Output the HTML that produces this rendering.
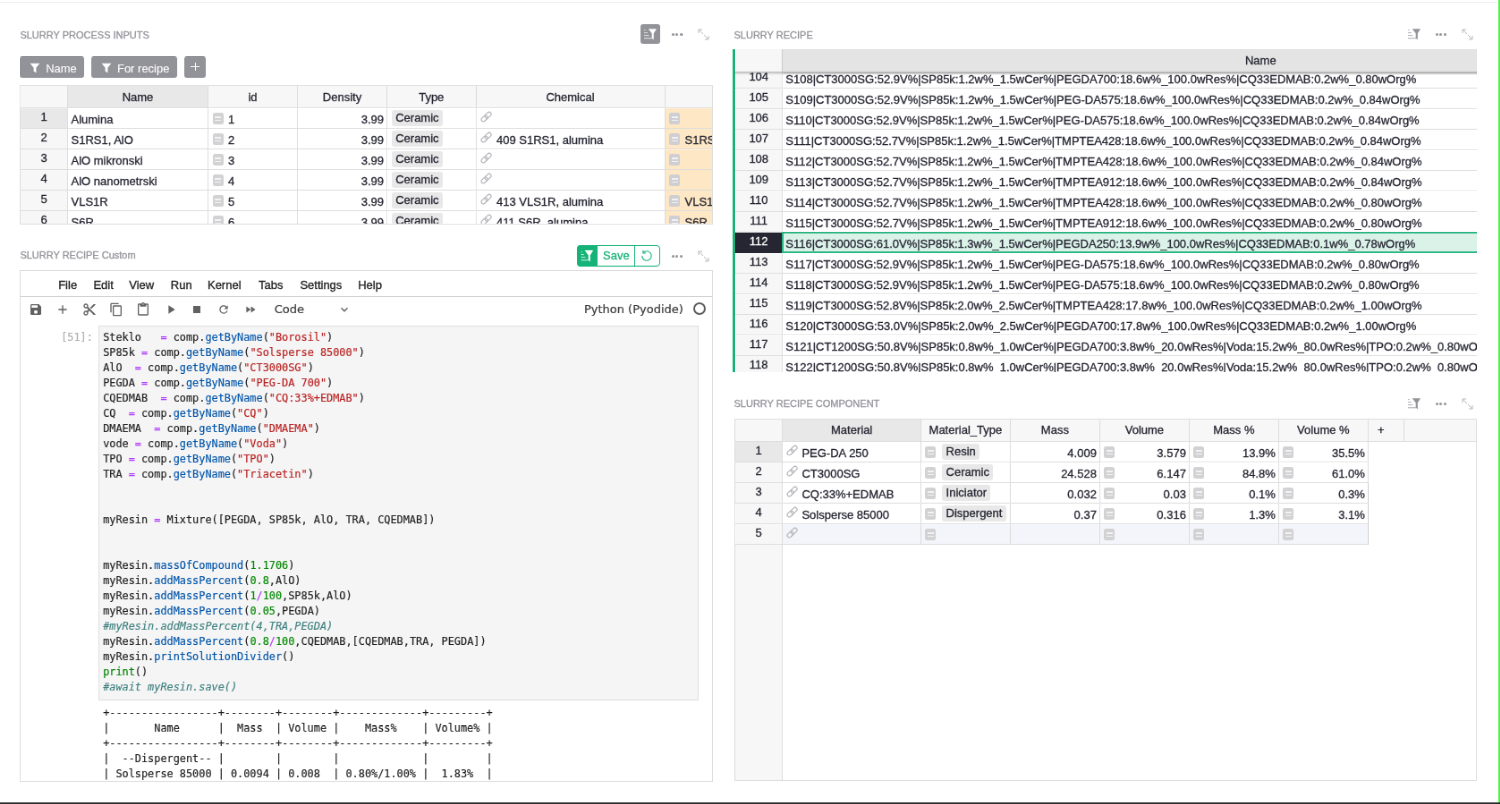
<!DOCTYPE html>
<html lang="en">
<head>
<meta charset="utf-8">
<title>Slurry recipe</title>
<style>
html,body{margin:0;padding:0;background:#fff;}
body{width:1500px;height:804px;overflow:hidden;position:relative;font-family:"Liberation Sans",sans-serif;}
#root{position:absolute;left:0;top:0;width:1677px;height:899px;transform:scale(0.8945);transform-origin:0 0;font-size:13px;color:#262633;will-change:transform;-webkit-text-stroke:0.3px;}
.abs{position:absolute;}
.title{position:absolute;font-size:11px;color:#929299;white-space:nowrap;}
.topline{position:absolute;left:0;top:2px;width:1674px;height:1px;background:#eeeeee;}
.greenline{position:absolute;left:1674.5px;top:0;width:3px;height:899px;background:#48f53c;}
.bottomline{position:absolute;left:0;top:897.4px;width:1677px;height:2px;background:#2a2a2a;}
.grid{position:absolute;overflow:hidden;background:#fff;box-sizing:border-box;}
.c{position:absolute;box-sizing:border-box;border-right:1px solid #dedede;border-bottom:1px solid #dedede;height:23px;line-height:26px;white-space:nowrap;overflow:hidden;padding:0 3px 0 3.5px;background:#fff;}
.h{position:absolute;top:0;box-sizing:border-box;height:25px;line-height:24px;text-align:center;border-right:1px solid #dedede;border-bottom:1px solid #dedede;background:#f7f7f7;white-space:nowrap;overflow:hidden;}
.h.sel,.rn.sel{background:#e8e8e8;}
.rn{background:#f7f7f7;text-align:center;padding:0;line-height:20px;}
.num{text-align:right;}
.rnsel{background:#262633;color:#fff;border-right-color:#262633;border-bottom-color:#262633;}
.tok{position:absolute;top:1.5px;left:5px;background:#e8e8e8;border-radius:3px;padding:0 4.2px;height:18px;line-height:18px;}
.fi{position:absolute;left:4.5px;top:5px;width:12px;height:13px;border-radius:2.5px;background:#d2d2d4;}
.fi:before,.fi:after{content:"";position:absolute;left:2.5px;width:7px;height:1.4px;background:rgba(255,255,255,0.7);}
.fi:before{top:4.2px}.fi:after{top:7.6px}
.wfi{padding-left:22px;}
.lk{position:absolute;left:4.8px;top:3.2px;width:13.2px;height:13.2px;}
.wlk{padding-left:22.5px;}
.orange{background:#fde7c4;}
.addrow{background:#f4f4fb;}
.mi{font-size:13px;line-height:20px;color:#212121;white-space:nowrap;}
.dj{font-family:"DejaVu Sans",sans-serif;font-size:13px;-webkit-text-stroke:0.2px;line-height:20px;color:#3a3a3a;white-space:nowrap;}
.code{font-family:"DejaVu Sans Mono","Liberation Mono",monospace;font-size:11.873px;line-height:17px;margin:0;color:#212121;white-space:pre;-webkit-text-stroke:0.15px;}
.code .p{color:#0055aa}.code .o{color:#b23cff}.code .s{color:#ba2121}.code .n{color:#008800}.code .cm{color:#408080;font-style:italic}.code .b{color:#008000}
.btn{position:absolute;box-sizing:border-box;height:24px;line-height:27px;border-radius:3px;background:#929299;color:#fff;font-size:13px;white-space:nowrap;-webkit-text-stroke:0.1px;}
</style>
</head>
<body>
<div id="root">
<div class="topline"></div>
<!-- SECTION 1 -->
<div class="title" style="left:22.4px;top:33px;">SLURRY PROCESS INPUTS</div>
<div class="abs" style="left:715.82px;top:26.83px;width:22px;height:22px;border-radius:3px;background:#929299"></div><svg class="abs" style="left:715.82px;top:26.83px;width:22px;height:22px" viewBox="0 0 22 22"><g fill="#fff"><g opacity="0.8"><rect x="4" y="6.2" width="1.7" height="0.9"/><rect x="4" y="9.2" width="3.9" height="0.9"/><rect x="4" y="12.2" width="5.5" height="0.9"/><rect x="4" y="15.3" width="9.2" height="1"/></g><path d="M8.8 5.3 H18 L14.8 10.2 V17.4 L12.7 15.6 V10.2 Z"/></g></svg><span class="abs" style="left:750.65px;top:36.73px;width:3px;height:3px;border-radius:50%;background:#929299"></span><span class="abs" style="left:755.35px;top:36.73px;width:3px;height:3px;border-radius:50%;background:#929299"></span><span class="abs" style="left:760.05px;top:36.73px;width:3px;height:3px;border-radius:50%;background:#929299"></span><svg class="abs" style="left:779.77px;top:32.08px;width:13px;height:13px" viewBox="0 0 13 13"><g fill="none" stroke="#b4b4bc" stroke-width="0.95"><path d="M1 5 V1 H5 M1 1 L6 6"/><path d="M12 8 V12 H8 M12 12 L7 7"/></g></svg>
<div class="btn" style="left:22.14px;top:62.72px;width:71.77px;padding-left:29px;">Name</div><svg class="abs" style="left:33.14px;top:69.72px;width:12px;height:12px" viewBox="0 0 12 12"><path fill="#fff" d="M0.6 0.8 H11.4 L7.4 5.8 V11.4 L4.6 9.6 V5.8 Z"/></svg><div class="btn" style="left:101.96px;top:62.72px;width:95.92px;padding-left:29px;">For recipe</div><svg class="abs" style="left:112.96px;top:69.72px;width:12px;height:12px" viewBox="0 0 12 12"><path fill="#fff" d="M0.6 0.8 H11.4 L7.4 5.8 V11.4 L4.6 9.6 V5.8 Z"/></svg><div class="btn" style="left:206.15px;top:62.72px;width:24px;"></div><span class="abs" style="left:213.25px;top:73.92px;width:9.8px;height:1.2px;background:#fff"></span><span class="abs" style="left:217.55px;top:69.62px;width:1.2px;height:9.8px;background:#fff"></span>
<div class="grid" style="left:22px;top:95px;width:774.5px;height:156px;border:1px solid #dedede;">
<div class="h" style="left:0px;top:0px;width:53px;line-height:26px"></div><div class="h sel" style="left:53px;top:0px;width:157px;line-height:26px">Name</div><div class="h" style="left:210px;top:0px;width:100px;line-height:26px">id</div><div class="h" style="left:310px;top:0px;width:100px;line-height:26px">Density</div><div class="h" style="left:410px;top:0px;width:99.5px;line-height:26px">Type</div><div class="h" style="left:509.5px;top:0px;width:211px;line-height:26px">Chemical</div><div class="h" style="left:720.5px;top:0px;width:120px;line-height:26px"></div>
<div class="c rn sel" style="left:0px;top:25px;width:53px">1</div><div class="c" style="left:53px;top:25px;width:157px">Alumina</div><div class="c wfi" style="left:210px;top:25px;width:100px"><span class="fi" style=""></span>1</div><div class="c num" style="left:310px;top:25px;width:100px">3.99</div><div class="c" style="left:410px;top:25px;width:99.5px"><span class="tok">Ceramic</span></div><div class="c wlk" style="left:509.5px;top:25px;width:211px"><svg class="lk" style="" viewBox="0 0 14 14"><g fill="none" stroke="#b0b0b6" stroke-width="1.15" transform="rotate(-43 7 7)"><rect x="-0.1" y="4.6" width="8.3" height="4.8" rx="2.4"/><rect x="5.8" y="4.6" width="8.3" height="4.8" rx="2.4"/></g></svg></div><div class="c wfi orange" style="left:720.5px;top:25px;width:120px"><span class="fi" style="background:#cfced2"></span></div>
<div class="c rn" style="left:0px;top:48px;width:53px">2</div><div class="c" style="left:53px;top:48px;width:157px">S1RS1, AlO</div><div class="c wfi" style="left:210px;top:48px;width:100px"><span class="fi" style=""></span>2</div><div class="c num" style="left:310px;top:48px;width:100px">3.99</div><div class="c" style="left:410px;top:48px;width:99.5px"><span class="tok">Ceramic</span></div><div class="c wlk" style="left:509.5px;top:48px;width:211px"><svg class="lk" style="" viewBox="0 0 14 14"><g fill="none" stroke="#b0b0b6" stroke-width="1.15" transform="rotate(-43 7 7)"><rect x="-0.1" y="4.6" width="8.3" height="4.8" rx="2.4"/><rect x="5.8" y="4.6" width="8.3" height="4.8" rx="2.4"/></g></svg>409 S1RS1, alumina</div><div class="c wfi orange" style="left:720.5px;top:48px;width:120px"><span class="fi" style="background:#cfced2"></span>S1RS1</div>
<div class="c rn" style="left:0px;top:71px;width:53px">3</div><div class="c" style="left:53px;top:71px;width:157px">AlO mikronski</div><div class="c wfi" style="left:210px;top:71px;width:100px"><span class="fi" style=""></span>3</div><div class="c num" style="left:310px;top:71px;width:100px">3.99</div><div class="c" style="left:410px;top:71px;width:99.5px"><span class="tok">Ceramic</span></div><div class="c wlk" style="left:509.5px;top:71px;width:211px"><svg class="lk" style="" viewBox="0 0 14 14"><g fill="none" stroke="#b0b0b6" stroke-width="1.15" transform="rotate(-43 7 7)"><rect x="-0.1" y="4.6" width="8.3" height="4.8" rx="2.4"/><rect x="5.8" y="4.6" width="8.3" height="4.8" rx="2.4"/></g></svg></div><div class="c wfi orange" style="left:720.5px;top:71px;width:120px"><span class="fi" style="background:#cfced2"></span></div>
<div class="c rn" style="left:0px;top:94px;width:53px">4</div><div class="c" style="left:53px;top:94px;width:157px">AlO nanometrski</div><div class="c wfi" style="left:210px;top:94px;width:100px"><span class="fi" style=""></span>4</div><div class="c num" style="left:310px;top:94px;width:100px">3.99</div><div class="c" style="left:410px;top:94px;width:99.5px"><span class="tok">Ceramic</span></div><div class="c wlk" style="left:509.5px;top:94px;width:211px"><svg class="lk" style="" viewBox="0 0 14 14"><g fill="none" stroke="#b0b0b6" stroke-width="1.15" transform="rotate(-43 7 7)"><rect x="-0.1" y="4.6" width="8.3" height="4.8" rx="2.4"/><rect x="5.8" y="4.6" width="8.3" height="4.8" rx="2.4"/></g></svg></div><div class="c wfi orange" style="left:720.5px;top:94px;width:120px"><span class="fi" style="background:#cfced2"></span></div>
<div class="c rn" style="left:0px;top:117px;width:53px">5</div><div class="c" style="left:53px;top:117px;width:157px">VLS1R</div><div class="c wfi" style="left:210px;top:117px;width:100px"><span class="fi" style=""></span>5</div><div class="c num" style="left:310px;top:117px;width:100px">3.99</div><div class="c" style="left:410px;top:117px;width:99.5px"><span class="tok">Ceramic</span></div><div class="c wlk" style="left:509.5px;top:117px;width:211px"><svg class="lk" style="" viewBox="0 0 14 14"><g fill="none" stroke="#b0b0b6" stroke-width="1.15" transform="rotate(-43 7 7)"><rect x="-0.1" y="4.6" width="8.3" height="4.8" rx="2.4"/><rect x="5.8" y="4.6" width="8.3" height="4.8" rx="2.4"/></g></svg>413 VLS1R, alumina</div><div class="c wfi orange" style="left:720.5px;top:117px;width:120px"><span class="fi" style="background:#cfced2"></span>VLS1R</div>
<div class="c rn" style="left:0px;top:140px;width:53px">6</div><div class="c" style="left:53px;top:140px;width:157px">S6R</div><div class="c wfi" style="left:210px;top:140px;width:100px"><span class="fi" style=""></span>6</div><div class="c num" style="left:310px;top:140px;width:100px">3.99</div><div class="c" style="left:410px;top:140px;width:99.5px"><span class="tok">Ceramic</span></div><div class="c wlk" style="left:509.5px;top:140px;width:211px"><svg class="lk" style="" viewBox="0 0 14 14"><g fill="none" stroke="#b0b0b6" stroke-width="1.15" transform="rotate(-43 7 7)"><rect x="-0.1" y="4.6" width="8.3" height="4.8" rx="2.4"/><rect x="5.8" y="4.6" width="8.3" height="4.8" rx="2.4"/></g></svg>411 S6R, alumina</div><div class="c wfi orange" style="left:720.5px;top:140px;width:120px"><span class="fi" style="background:#cfced2"></span>S6R</div>
</div>
<!-- SECTION 3 -->
<div class="title" style="left:820.5px;top:33px;">SLURRY RECIPE</div>
<svg class="abs" style="left:1570.37px;top:26.83px;width:22px;height:22px" viewBox="0 0 22 22"><g fill="#929299"><g opacity="0.8"><rect x="4" y="6.2" width="1.7" height="0.9"/><rect x="4" y="9.2" width="3.9" height="0.9"/><rect x="4" y="12.2" width="5.5" height="0.9"/><rect x="4" y="15.3" width="9.2" height="1"/></g><path d="M8.8 5.3 H18 L14.8 10.2 V17.4 L12.7 15.6 V10.2 Z"/></g></svg><span class="abs" style="left:1604.76px;top:36.73px;width:3px;height:3px;border-radius:50%;background:#929299"></span><span class="abs" style="left:1609.46px;top:36.73px;width:3px;height:3px;border-radius:50%;background:#929299"></span><span class="abs" style="left:1614.16px;top:36.73px;width:3px;height:3px;border-radius:50%;background:#929299"></span><svg class="abs" style="left:1633.87px;top:32.08px;width:13px;height:13px" viewBox="0 0 13 13"><g fill="none" stroke="#b4b4bc" stroke-width="0.95"><path d="M1 5 V1 H5 M1 1 L6 6"/><path d="M12 8 V12 H8 M12 12 L7 7"/></g></svg>
<div class="grid" style="left:819.2px;top:55px;width:831.7px;height:361.2px;border-left:3px solid #16b378;">
<div class="c rn" style="left:0;top:21.1px;width:53.1px;line-height:20px">104</div><div class="c" style="left:53.1px;top:21.1px;width:1068px;padding-left:3px;line-height:26px">S108|CT3000SG:52.9V%|SP85k:1.2w%_1.5wCer%|PEGDA700:18.6w%_100.0wRes%|CQ33EDMAB:0.2w%_0.80wOrg%</div>
<div class="c rn" style="left:0;top:44.1px;width:53.1px;line-height:20px">105</div><div class="c" style="left:53.1px;top:44.1px;width:1068px;padding-left:3px;line-height:26px">S109|CT3000SG:52.9V%|SP85k:1.2w%_1.5wCer%|PEG-DA575:18.6w%_100.0wRes%|CQ33EDMAB:0.2w%_0.84wOrg%</div>
<div class="c rn" style="left:0;top:67.1px;width:53.1px;line-height:20px">106</div><div class="c" style="left:53.1px;top:67.1px;width:1068px;padding-left:3px;line-height:26px">S110|CT3000SG:52.9V%|SP85k:1.2w%_1.5wCer%|PEG-DA575:18.6w%_100.0wRes%|CQ33EDMAB:0.2w%_0.84wOrg%</div>
<div class="c rn" style="left:0;top:90.1px;width:53.1px;line-height:20px">107</div><div class="c" style="left:53.1px;top:90.1px;width:1068px;padding-left:3px;line-height:26px">S111|CT3000SG:52.7V%|SP85k:1.2w%_1.5wCer%|TMPTEA428:18.6w%_100.0wRes%|CQ33EDMAB:0.2w%_0.84wOrg%</div>
<div class="c rn" style="left:0;top:113.1px;width:53.1px;line-height:20px">108</div><div class="c" style="left:53.1px;top:113.1px;width:1068px;padding-left:3px;line-height:26px">S112|CT3000SG:52.7V%|SP85k:1.2w%_1.5wCer%|TMPTEA428:18.6w%_100.0wRes%|CQ33EDMAB:0.2w%_0.84wOrg%</div>
<div class="c rn" style="left:0;top:136.1px;width:53.1px;line-height:20px">109</div><div class="c" style="left:53.1px;top:136.1px;width:1068px;padding-left:3px;line-height:26px">S113|CT3000SG:52.7V%|SP85k:1.2w%_1.5wCer%|TMPTEA912:18.6w%_100.0wRes%|CQ33EDMAB:0.2w%_0.84wOrg%</div>
<div class="c rn" style="left:0;top:159.1px;width:53.1px;line-height:20px">110</div><div class="c" style="left:53.1px;top:159.1px;width:1068px;padding-left:3px;line-height:26px">S114|CT3000SG:52.7V%|SP85k:1.2w%_1.5wCer%|TMPTEA428:18.6w%_100.0wRes%|CQ33EDMAB:0.2w%_0.80wOrg%</div>
<div class="c rn" style="left:0;top:182.1px;width:53.1px;line-height:20px">111</div><div class="c" style="left:53.1px;top:182.1px;width:1068px;padding-left:3px;line-height:26px">S115|CT3000SG:52.7V%|SP85k:1.2w%_1.5wCer%|TMPTEA912:18.6w%_100.0wRes%|CQ33EDMAB:0.2w%_0.80wOrg%</div>
<div class="c rn rnsel" style="left:0;top:205.1px;width:53.1px;line-height:20px">112</div><div class="c" style="left:53.1px;top:205.1px;width:1068px;padding-left:3px;line-height:26px;background:#dbf2e8;">S116|CT3000SG:61.0V%|SP85k:1.3w%_1.5wCer%|PEGDA250:13.9w%_100.0wRes%|CQ33EDMAB:0.1w%_0.78wOrg%</div><div class="abs" style="left:52.1px;top:204.1px;width:1068px;height:24px;box-sizing:border-box;border:2.1px solid #2ab683;"></div>
<div class="c rn" style="left:0;top:228.1px;width:53.1px;line-height:20px">113</div><div class="c" style="left:53.1px;top:228.1px;width:1068px;padding-left:3px;line-height:26px">S117|CT3000SG:52.9V%|SP85k:1.2w%_1.5wCer%|PEG-DA575:18.6w%_100.0wRes%|CQ33EDMAB:0.2w%_0.80wOrg%</div>
<div class="c rn" style="left:0;top:251.1px;width:53.1px;line-height:20px">114</div><div class="c" style="left:53.1px;top:251.1px;width:1068px;padding-left:3px;line-height:26px">S118|CT3000SG:52.9V%|SP85k:1.2w%_1.5wCer%|PEG-DA575:18.6w%_100.0wRes%|CQ33EDMAB:0.2w%_0.80wOrg%</div>
<div class="c rn" style="left:0;top:274.1px;width:53.1px;line-height:20px">115</div><div class="c" style="left:53.1px;top:274.1px;width:1068px;padding-left:3px;line-height:26px">S119|CT3000SG:52.8V%|SP85k:2.0w%_2.5wCer%|TMPTEA428:17.8w%_100.0wRes%|CQ33EDMAB:0.2w%_1.00wOrg%</div>
<div class="c rn" style="left:0;top:297.1px;width:53.1px;line-height:20px">116</div><div class="c" style="left:53.1px;top:297.1px;width:1068px;padding-left:3px;line-height:26px">S120|CT3000SG:53.0V%|SP85k:2.0w%_2.5wCer%|PEGDA700:17.8w%_100.0wRes%|CQ33EDMAB:0.2w%_1.00wOrg%</div>
<div class="c rn" style="left:0;top:320.1px;width:53.1px;line-height:20px">117</div><div class="c" style="left:53.1px;top:320.1px;width:1068px;padding-left:3px;line-height:26px">S121|CT1200SG:50.8V%|SP85k:0.8w%_1.0wCer%|PEGDA700:3.8w%_20.0wRes%|Voda:15.2w%_80.0wRes%|TPO:0.2w%_0.80wOrg%</div>
<div class="c rn" style="left:0;top:343.1px;width:53.1px;line-height:20px">118</div><div class="c" style="left:53.1px;top:343.1px;width:1068px;padding-left:3px;line-height:26px">S122|CT1200SG:50.8V%|SP85k:0.8w%_1.0wCer%|PEGDA700:3.8w%_20.0wRes%|Voda:15.2w%_80.0wRes%|TPO:0.2w%_0.80wOrg%</div>
<div class="abs" style="left:0;top:0;width:53.1px;height:26px;box-sizing:border-box;background:#f7f7f7;border-right:1px solid #dedede;border-bottom:1px solid #b8b8b8;"></div><div class="abs" style="left:53.1px;top:0;width:1068px;height:26px;line-height:26px;box-sizing:border-box;background:#e4e4e4;border-bottom:1px solid #b8b8b8;text-align:center;box-shadow:0 1px 2px rgba(0,0,0,0.25);">Name</div><div class="abs" style="left:0;top:26px;width:1300px;height:3px;background:linear-gradient(rgba(0,0,0,0.18),rgba(0,0,0,0));"></div>
</div>
<!-- SECTION 4 -->
<div class="title" style="left:820.5px;top:445.15px;">SLURRY RECIPE COMPONENT</div>
<svg class="abs" style="left:1570.37px;top:439.91px;width:22px;height:22px" viewBox="0 0 22 22"><g fill="#929299"><g opacity="0.8"><rect x="4" y="6.2" width="1.7" height="0.9"/><rect x="4" y="9.2" width="3.9" height="0.9"/><rect x="4" y="12.2" width="5.5" height="0.9"/><rect x="4" y="15.3" width="9.2" height="1"/></g><path d="M8.8 5.3 H18 L14.8 10.2 V17.4 L12.7 15.6 V10.2 Z"/></g></svg><span class="abs" style="left:1604.76px;top:449.81px;width:3px;height:3px;border-radius:50%;background:#929299"></span><span class="abs" style="left:1609.46px;top:449.81px;width:3px;height:3px;border-radius:50%;background:#929299"></span><span class="abs" style="left:1614.16px;top:449.81px;width:3px;height:3px;border-radius:50%;background:#929299"></span><svg class="abs" style="left:1633.87px;top:445.16px;width:13px;height:13px" viewBox="0 0 13 13"><g fill="none" stroke="#b4b4bc" stroke-width="0.95"><path d="M1 5 V1 H5 M1 1 L6 6"/><path d="M12 8 V12 H8 M12 12 L7 7"/></g></svg>
<div class="grid" style="left:820.9px;top:468.2px;width:829.7px;height:405.2px;border:1px solid #dedede;">
<div class="abs" style="left:0;top:0;width:53.5px;height:100%;background:#f7f7f7;border-right:1px solid #dedede;box-sizing:border-box"></div><div class="abs" style="left:0;top:0;width:100%;height:25px;background:#f7f7f7;border-bottom:1px solid #dedede;box-sizing:border-box"></div><div class="h" style="left:0px;top:0px;width:53.5px"></div><div class="h sel" style="left:53.5px;top:0px;width:154.5px">Material</div><div class="h" style="left:208.0px;top:0px;width:100px">Material_Type</div><div class="h" style="left:308.0px;top:0px;width:100px">Mass</div><div class="h" style="left:408.0px;top:0px;width:100px">Volume</div><div class="h" style="left:508.0px;top:0px;width:100px">Mass %</div><div class="h" style="left:608.0px;top:0px;width:100px">Volume %</div><div class="h" style="left:708.0px;top:0px;width:40px"><span style="position:relative;left:-5.5px">+</span></div>
<div class="c rn sel" style="left:0px;top:25px;width:53.5px">1</div><div class="c wlk" style="left:53.5px;top:25px;width:154.5px;padding-left:21px"><svg class="lk" style="left:3.7px" viewBox="0 0 14 14"><g fill="none" stroke="#b0b0b6" stroke-width="1.15" transform="rotate(-43 7 7)"><rect x="-0.1" y="4.6" width="8.3" height="4.8" rx="2.4"/><rect x="5.8" y="4.6" width="8.3" height="4.8" rx="2.4"/></g></svg>PEG-DA 250</div><div class="c" style="left:208.0px;top:25px;width:100px"><span class="fi" style=""></span><span class="tok" style="left:23.5px">Resin</span></div><div class="c num" style="left:308.0px;top:25px;width:100px">4.009</div><div class="c num" style="left:408.0px;top:25px;width:100px"><span class="fi" style=""></span>3.579</div><div class="c num" style="left:508.0px;top:25px;width:100px"><span class="fi" style=""></span>13.9%</div><div class="c num" style="left:608.0px;top:25px;width:100px"><span class="fi" style=""></span>35.5%</div>
<div class="c rn" style="left:0px;top:48px;width:53.5px">2</div><div class="c wlk" style="left:53.5px;top:48px;width:154.5px;padding-left:21px"><svg class="lk" style="left:3.7px" viewBox="0 0 14 14"><g fill="none" stroke="#b0b0b6" stroke-width="1.15" transform="rotate(-43 7 7)"><rect x="-0.1" y="4.6" width="8.3" height="4.8" rx="2.4"/><rect x="5.8" y="4.6" width="8.3" height="4.8" rx="2.4"/></g></svg>CT3000SG</div><div class="c" style="left:208.0px;top:48px;width:100px"><span class="fi" style=""></span><span class="tok" style="left:23.5px">Ceramic</span></div><div class="c num" style="left:308.0px;top:48px;width:100px">24.528</div><div class="c num" style="left:408.0px;top:48px;width:100px"><span class="fi" style=""></span>6.147</div><div class="c num" style="left:508.0px;top:48px;width:100px"><span class="fi" style=""></span>84.8%</div><div class="c num" style="left:608.0px;top:48px;width:100px"><span class="fi" style=""></span>61.0%</div>
<div class="c rn" style="left:0px;top:71px;width:53.5px">3</div><div class="c wlk" style="left:53.5px;top:71px;width:154.5px;padding-left:21px"><svg class="lk" style="left:3.7px" viewBox="0 0 14 14"><g fill="none" stroke="#b0b0b6" stroke-width="1.15" transform="rotate(-43 7 7)"><rect x="-0.1" y="4.6" width="8.3" height="4.8" rx="2.4"/><rect x="5.8" y="4.6" width="8.3" height="4.8" rx="2.4"/></g></svg>CQ:33%+EDMAB</div><div class="c" style="left:208.0px;top:71px;width:100px"><span class="fi" style=""></span><span class="tok" style="left:23.5px">Iniciator</span></div><div class="c num" style="left:308.0px;top:71px;width:100px">0.032</div><div class="c num" style="left:408.0px;top:71px;width:100px"><span class="fi" style=""></span>0.03</div><div class="c num" style="left:508.0px;top:71px;width:100px"><span class="fi" style=""></span>0.1%</div><div class="c num" style="left:608.0px;top:71px;width:100px"><span class="fi" style=""></span>0.3%</div>
<div class="c rn" style="left:0px;top:94px;width:53.5px">4</div><div class="c wlk" style="left:53.5px;top:94px;width:154.5px;padding-left:21px"><svg class="lk" style="left:3.7px" viewBox="0 0 14 14"><g fill="none" stroke="#b0b0b6" stroke-width="1.15" transform="rotate(-43 7 7)"><rect x="-0.1" y="4.6" width="8.3" height="4.8" rx="2.4"/><rect x="5.8" y="4.6" width="8.3" height="4.8" rx="2.4"/></g></svg>Solsperse 85000</div><div class="c" style="left:208.0px;top:94px;width:100px"><span class="fi" style=""></span><span class="tok" style="left:23.5px">Dispergent</span></div><div class="c num" style="left:308.0px;top:94px;width:100px">0.37</div><div class="c num" style="left:408.0px;top:94px;width:100px"><span class="fi" style=""></span>0.316</div><div class="c num" style="left:508.0px;top:94px;width:100px"><span class="fi" style=""></span>1.3%</div><div class="c num" style="left:608.0px;top:94px;width:100px"><span class="fi" style=""></span>3.1%</div>
<div class="c rn" style="left:0px;top:117px;width:53.5px">5</div><div class="c wlk addrow" style="left:53.5px;top:117px;width:154.5px;padding-left:21px"><svg class="lk" style="left:3.7px" viewBox="0 0 14 14"><g fill="none" stroke="#b0b0b6" stroke-width="1.15" transform="rotate(-43 7 7)"><rect x="-0.1" y="4.6" width="8.3" height="4.8" rx="2.4"/><rect x="5.8" y="4.6" width="8.3" height="4.8" rx="2.4"/></g></svg></div><div class="c addrow" style="left:208.0px;top:117px;width:100px"><span class="fi" style=""></span></div><div class="c num addrow" style="left:308.0px;top:117px;width:100px"></div><div class="c num addrow" style="left:408.0px;top:117px;width:100px"><span class="fi" style=""></span></div><div class="c num addrow" style="left:508.0px;top:117px;width:100px"><span class="fi" style=""></span></div><div class="c num addrow" style="left:608.0px;top:117px;width:100px"><span class="fi" style=""></span></div>
</div>
<!-- SECTION 2 -->
<div class="title" style="left:22.4px;top:279.31px;">SLURRY RECIPE Custom</div>
<div class="abs" style="left:644.72px;top:274.23px;width:93.12px;height:23.93px;box-sizing:border-box;border:1.2px solid #16b378;border-radius:4px;background:#fff;"></div><div class="abs" style="left:644.72px;top:274.23px;width:22.92px;height:23.93px;background:#16b378;border-radius:4px 0 0 4px;"></div><svg class="abs" style="left:645.02px;top:275.23px;width:22px;height:22px" viewBox="0 0 22 22"><g fill="#fff"><g opacity="0.8"><rect x="4" y="6.2" width="1.7" height="0.9"/><rect x="4" y="9.2" width="3.9" height="0.9"/><rect x="4" y="12.2" width="5.5" height="0.9"/><rect x="4" y="15.3" width="9.2" height="1"/></g><path d="M8.8 5.3 H18 L14.8 10.2 V17.4 L12.7 15.6 V10.2 Z"/></g></svg><div class="abs" style="left:674.12px;top:274.23px;height:23.93px;line-height:23.93px;color:#16b378;font-size:13px;">Save</div><div class="abs" style="left:709.11px;top:274.23px;width:1.2px;height:23.93px;background:#16b378;"></div><svg class="abs" style="left:716.27px;top:279.23px;width:14px;height:14px" viewBox="0 0 16 16"><g fill="none" stroke="#16b378" stroke-width="1.3"><path d="M3.2 4.4 A6 6 0 1 1 2 8"/><path d="M3.4 1 V4.6 H7"/></g></svg><span class="abs" style="left:750.65px;top:284.69px;width:3px;height:3px;border-radius:50%;background:#929299"></span><span class="abs" style="left:755.35px;top:284.69px;width:3px;height:3px;border-radius:50%;background:#929299"></span><span class="abs" style="left:760.05px;top:284.69px;width:3px;height:3px;border-radius:50%;background:#929299"></span><svg class="abs" style="left:779.77px;top:279.93px;width:13px;height:13px" viewBox="0 0 13 13"><g fill="none" stroke="#b4b4bc" stroke-width="0.95"><path d="M1 5 V1 H5 M1 1 L6 6"/><path d="M12 8 V12 H8 M12 12 L7 7"/></g></svg>
<div class="abs" style="left:21.5px;top:302.4px;width:775.0px;height:572.0px;border:1px solid #dcdcdc;box-sizing:border-box;overflow:hidden;background:#fff;">
<div class="abs" style="left:0;top:27.51px;width:100%;height:1px;background:#cfcfcf"></div><span class="abs mi" style="left:42.68px;top:5.210000000000001px;">File</span><span class="abs mi" style="left:81.92px;top:5.210000000000001px;">Edit</span><span class="abs mi" style="left:121.71px;top:5.210000000000001px;">View</span><span class="abs mi" style="left:168.33px;top:5.210000000000001px;">Run</span><span class="abs mi" style="left:209.47px;top:5.210000000000001px;">Kernel</span><span class="abs mi" style="left:266.49px;top:5.210000000000001px;">Tabs</span><span class="abs mi" style="left:312.88px;top:5.210000000000001px;">Settings</span><span class="abs mi" style="left:377.72px;top:5.210000000000001px;">Help</span>
<svg class="abs" style="left:9.19px;top:34.72px;width:16px;height:16px" viewBox="0 0 24 24"><path fill="#616161" d="M17 3H5c-1.11 0-2 .9-2 2v14c0 1.1.89 2 2 2h14c1.1 0 2-.9 2-2V7l-4-4zm-5 16c-1.66 0-3-1.34-3-3s1.34-3 3-3 3 1.34 3 3-1.34 3-3 3zm3-10H5V5h10v4z" /></svg><svg class="abs" style="left:39.15px;top:34.72px;width:16px;height:16px" viewBox="0 0 24 24"><path fill="#616161" d="M19 13h-6v6h-2v-6H5v-2h6V5h2v6h6v2z" /></svg><svg class="abs" style="left:69.44px;top:34.72px;width:16px;height:16px" viewBox="0 0 24 24"><path fill="#616161" d="M9.64 7.64c.23-.5.36-1.05.36-1.64 0-2.21-1.79-4-4-4S2 3.79 2 6s1.79 4 4 4c.59 0 1.14-.13 1.64-.36L10 12l-2.36 2.36C7.14 14.13 6.59 14 6 14c-2.21 0-4 1.79-4 4s1.79 4 4 4 4-1.79 4-4c0-.59-.13-1.14-.36-1.64L12 14l7 7h3v-1L9.64 7.64zM6 8c-1.1 0-2-.89-2-2s.9-2 2-2 2 .89 2 2-.9 2-2 2zm0 12c-1.1 0-2-.89-2-2s.9-2 2-2 2 .89 2 2-.9 2-2 2zm6-7.5c-.28 0-.5-.22-.5-.5s.22-.5.5-.5.5.22.5.5-.22.5-.5.5zM19 3l-6 6 2 2 7-7V3z" /></svg><svg class="abs" style="left:99.18px;top:34.72px;width:16px;height:16px" viewBox="0 0 24 24"><path fill="#616161" d="M16 1H4c-1.1 0-2 .9-2 2v14h2V3h12V1zm3 4H8c-1.1 0-2 .9-2 2v14c0 1.1.9 2 2 2h11c1.1 0 2-.9 2-2V7c0-1.1-.9-2-2-2zm0 16H8V7h11v14z" /></svg><svg class="abs" style="left:129.37px;top:34.72px;width:16px;height:16px" viewBox="0 0 24 24"><path fill="#616161" d="M19 2h-4.18C14.4.84 13.3 0 12 0c-1.3 0-2.4.84-2.82 2H5c-1.1 0-2 .9-2 2v16c0 1.1.9 2 2 2h14c1.1 0 2-.9 2-2V4c0-1.1-.9-2-2-2zm-7 0c.55 0 1 .45 1 1s-.45 1-1 1-1-.45-1-1 .45-1 1-1zm7 18H5V4h2v3h10V4h2v16z" /></svg><svg class="abs" style="left:160.22px;top:34.72px;width:16px;height:16px" viewBox="0 0 24 24"><path fill="#616161" d="M8 5v14l11-7z" /></svg><svg class="abs" style="left:189.73px;top:34.72px;width:16px;height:16px" viewBox="0 0 24 24"><path fill="#616161" d="M6 6h12v12H6z" /></svg><svg class="abs" style="left:220.58px;top:35.72px;width:14px;height:14px" viewBox="0 0 24 24"><path fill="#616161" d="M17.65 6.35C16.2 4.9 14.21 4 12 4c-4.42 0-7.99 3.58-7.99 8s3.57 8 7.99 8c3.73 0 6.84-2.55 7.73-6h-2.08c-.82 2.33-3.04 4-5.65 4-3.31 0-6-2.69-6-6s2.69-6 6-6c1.66 0 3.14.69 4.22 1.78L13 11h7V4l-2.35 2.35z" /></svg><svg class="abs" style="left:250.77px;top:35.72px;width:14px;height:14px" viewBox="0 0 24 24"><path fill="#616161" d="M4 18l8.5-6L4 6v12zm9-12v12l8.5-6L13 6z" /></svg><span class="abs dj" style="left:284.15px;top:32.72px;">Code</span><svg class="abs" style="left:357.41px;top:37.72px;width:10px;height:10px" viewBox="0 0 10 10"><path fill="none" stroke="#616161" stroke-width="1.4" d="M1.5 3.2 L5 6.7 L8.5 3.2"/></svg><span class="abs dj" style="left:630.38px;top:32.84px;">Python (Pyodide)</span><span class="abs" style="left:752.41px;top:34.62px;width:14.4px;height:14.4px;box-sizing:border-box;border:2.1px solid #5c5c5c;border-radius:50%"></span>
<div class="abs" style="left:87.39px;top:60.27px;width:670.99px;height:419.23px;box-sizing:border-box;border:1px solid #e0e0e0;background:#f5f5f5;"></div><span class="abs code" style="left:45.69px;top:65.63px;color:#b0b0b0;">[51]:</span><pre class="abs code" style="left:92.65px;top:65.63px;">Steklo   <span class="o">=</span> comp.<span class="p">getByName</span>(<span class="s">&quot;Borosil&quot;</span>)
SP85k <span class="o">=</span> comp.<span class="p">getByName</span>(<span class="s">&quot;Solsperse 85000&quot;</span>)
AlO  <span class="o">=</span> comp.<span class="p">getByName</span>(<span class="s">&quot;CT3000SG&quot;</span>)
PEGDA <span class="o">=</span> comp.<span class="p">getByName</span>(<span class="s">&quot;PEG-DA 700&quot;</span>)
CQEDMAB  <span class="o">=</span> comp.<span class="p">getByName</span>(<span class="s">&quot;CQ:33%+EDMAB&quot;</span>)
CQ  <span class="o">=</span> comp.<span class="p">getByName</span>(<span class="s">&quot;CQ&quot;</span>)
DMAEMA  <span class="o">=</span> comp.<span class="p">getByName</span>(<span class="s">&quot;DMAEMA&quot;</span>)
vode <span class="o">=</span> comp.<span class="p">getByName</span>(<span class="s">&quot;Voda&quot;</span>)
TPO <span class="o">=</span> comp.<span class="p">getByName</span>(<span class="s">&quot;TPO&quot;</span>)
TRA <span class="o">=</span> comp.<span class="p">getByName</span>(<span class="s">&quot;Triacetin&quot;</span>)


myResin <span class="o">=</span> Mixture([PEGDA, SP85k, AlO, TRA, CQEDMAB])


myResin.<span class="p">massOfCompound</span>(<span class="n">1.1706</span>)
myResin.<span class="p">addMassPercent</span>(<span class="n">0.8</span>,AlO)
myResin.<span class="p">addMassPercent</span>(<span class="n">1</span><span class="o">/</span><span class="n">100</span>,SP85k,AlO)
myResin.<span class="p">addMassPercent</span>(<span class="n">0.05</span>,PEGDA)
<span class="cm">#myResin.addMassPercent(4,TRA,PEGDA)</span>
myResin.<span class="p">addMassPercent</span>(<span class="n">0.8</span><span class="o">/</span><span class="n">100</span>,CQEDMAB,[CQEDMAB,TRA, PEGDA])
myResin.<span class="p">printSolutionDivider</span>()
<span class="b">print</span>()
<span class="cm">#await myResin.save()</span></pre>
<pre class="abs code" style="left:92.65px;top:485.75px;">+-----------------+--------+--------+-------------+---------+
|       Name      |  Mass  | Volume |    Mass%    | Volume% |
+-----------------+--------+--------+-------------+---------+
|  --Dispergent-- |        |        |             |         |
| Solsperse 85000 | 0.0094 | 0.008  | 0.80%/1.00% |  1.83%  |</pre>
</div>
<div class="greenline"></div>
<div class="bottomline"></div>
</div>
</body>
</html>
